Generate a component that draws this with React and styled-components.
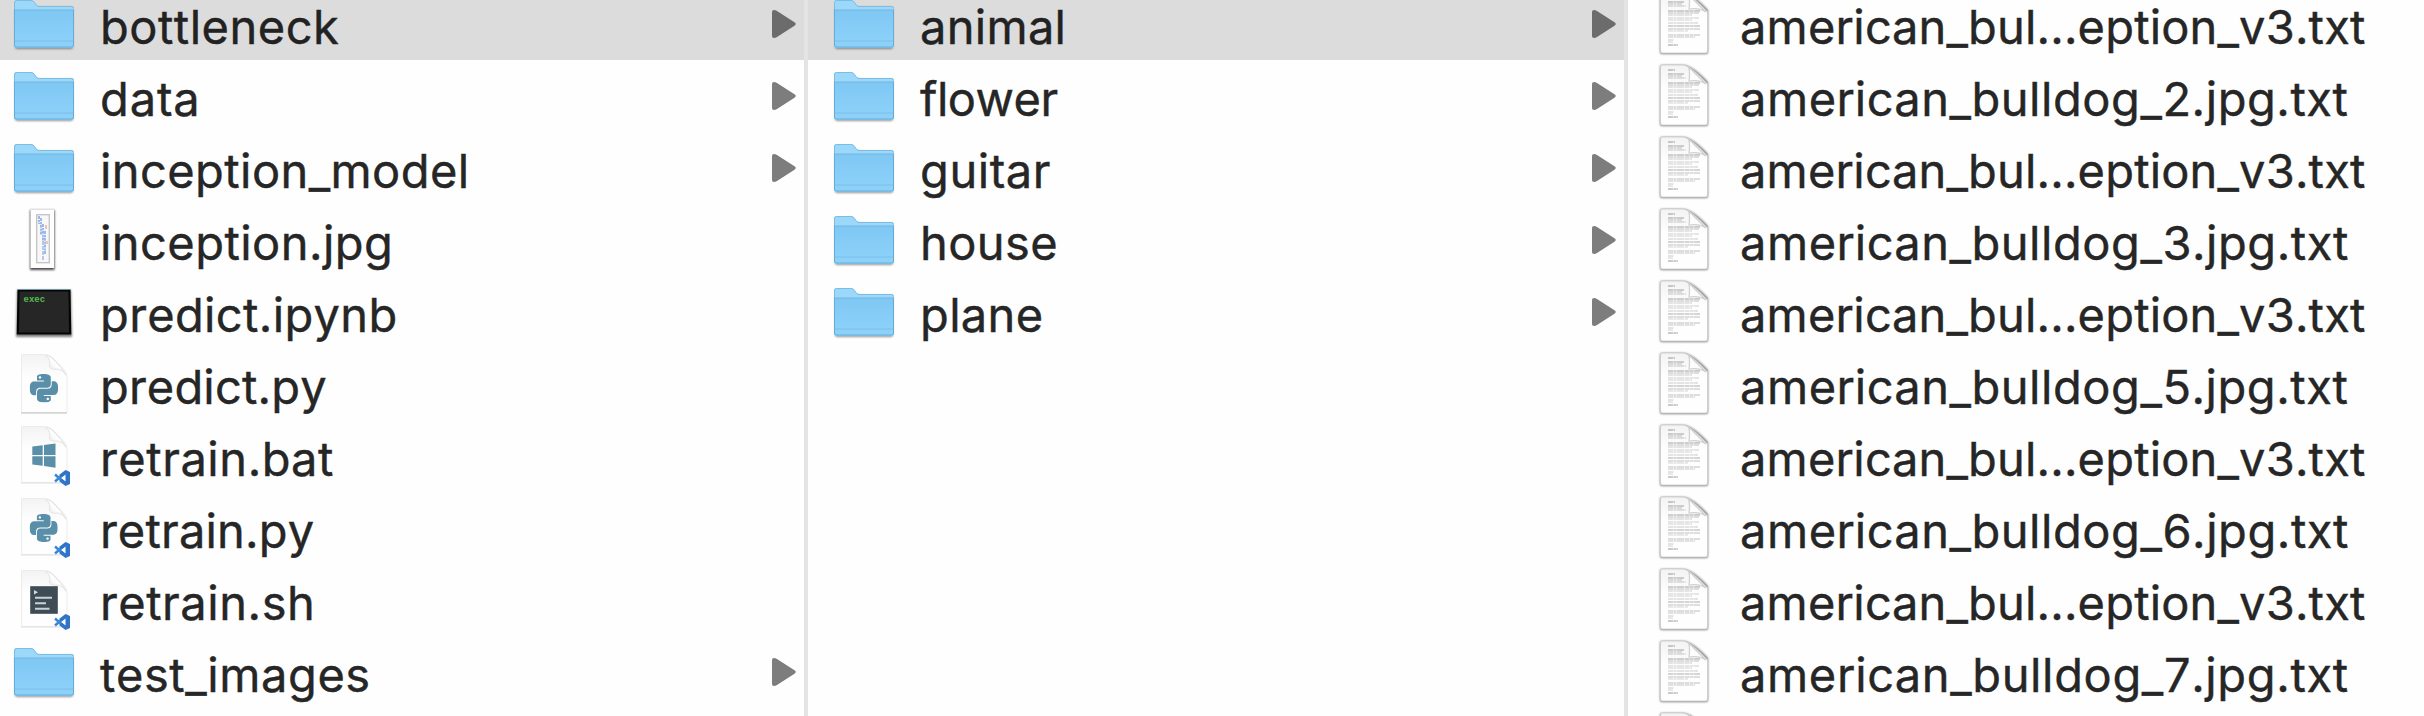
import React from "react";
import styled, { createGlobalStyle } from "styled-components";
import { SiPython } from "react-icons/si";

const GlobalStyle = createGlobalStyle`
  html, body { margin: 0; padding: 0; background: #fff; }
  body { overflow: hidden; }
`;

const Browser = styled.main`
  display: flex;
  height: 716px;
  overflow: hidden;
  background: #fefefe;
  color: #262626;
  font-family: Inter, "Liberation Sans", sans-serif;
  font-size: 47px;
  font-weight: 400;
  font-kerning: none;
  font-variant-ligatures: none;
`;

const Column = styled.ul`
  box-sizing: border-box;
  flex: ${(p) => (p.$width ? `0 0 ${p.$width}px` : "1 1 0")};
  min-width: 0;
  margin: -12px 0 0;
  padding: 0;
  list-style: none;
  border-right: ${(p) => (p.$width ? "4px solid #e4e4e4" : "0")};
`;

const Row = styled.li`
  box-sizing: border-box;
  display: flex;
  align-items: center;
  height: 72px;
  padding: 0 8px 0 ${(p) => p.$indent}px;
  background: ${(p) => (p.$selected ? "#dcdcdc" : "transparent")};
  color: ${(p) => (p.$selected ? "#222" : "#262626")};
`;

const Icon = styled.svg`
  flex: none;
  width: 64px;
  height: 64px;
  margin-right: 24px;
  overflow: visible;
`;

const Name = styled.span`
  flex: 1;
  line-height: 42px;
  padding-top: 6px;
  white-space: nowrap;
  letter-spacing: ${(p) => p.$tracking}px;
  -webkit-text-stroke: 0.4px currentColor;
`;

const Arrow = styled.svg`
  flex: none;
  width: 24px;
  height: 28px;
  fill: ${(p) => (p.$selected ? "#6c6c6c" : "#7d7d7d")};
`;

const Gradients = () => (
  <svg width="0" height="0" style={{ display: "block", height: 0 }}>
    <defs>
      <linearGradient id="folder" x1="0" y1="0" x2="0" y2="1">
        <stop offset="0" stopColor="#7fc8f4" />
        <stop offset="1" stopColor="#8ed2fa" />
      </linearGradient>
      <linearGradient id="sheet" x1="0" y1="0" x2="0" y2="1">
        <stop offset="0" stopColor="#f3f3f3" />
        <stop offset="0.4" stopColor="#fefefe" />
      </linearGradient>
      <linearGradient id="curl" x1="0" y1="1" x2="1" y2="0">
        <stop offset="0" stopColor="#dadada" />
        <stop offset="0.5" stopColor="#fff" />
        <stop offset="1" stopColor="#ddd" />
      </linearGradient>
      <filter id="soft" x="-20%" y="-20%" width="140%" height="140%">
        <feGaussianBlur stdDeviation="1.3" />
      </filter>
    </defs>
  </svg>
);

const Folder = () => (
  <>
    <rect x="3" y="15" width="58" height="42" rx="2" fill="#000" opacity=".4" filter="url(#soft)" />
    <path d="M2 53.500V10.500Q2 8 4.500 8H19Q21 8 22.300 9.700L24 12.200Q25 14 27 14H59.500Q62 14 62 16.500V53.500Q62 55.500 60 55.500H4Q2 55.500 2 53.500Z" fill="#9bd8fa" />
    <path d="M2.500 18V11Q2.500 8.500 4.500 8.500H19Q21 8.500 22.300 10.200L24 12.700Q25 14.500 27 14.500H59.500Q61.500 14.500 61.500 16.500" fill="none" stroke="#7dbde2" />
    <path d="M2 18H62V53.500Q62 55.500 60 55.500H4Q2 55.500 2 53.500Z" fill="url(#folder)" />
    <path d="M2 18H62" stroke="#74b6de" />
    <path d="M2.500 18V53Q2.500 55 4.500 55H59.500Q61.500 55 61.500 53V18" fill="none" stroke="#65add9" />
    <path d="M3 49H61" stroke="#78bce4" strokeWidth=".8" />
  </>
);

const textLines = [
  [7, 6, 0.5], [16, 10, 0.45], [14, 12, 0.3], [18, 14, 0.28], [32, 19, 0.45],
  [31, 21, 0.3], [24, 23, 0.25], [31, 26, 0.24], [24, 28, 0.23], [30, 31, 0.26],
  [32, 34, 0.4], [32, 37, 0.32], [20, 39, 0.2], [32, 43, 0.32], [27, 45, 0.28],
  [6, 48, 0.25], [5, 50, 0.22], [10, 53, 0.5],
];

const TextFile = () => (
  <>
    <path d="M8 3Q8 1 10 1H31Q40 1 56 18V60Q56 62 54 62H10Q8 62 8 60Z" fill="#000" opacity=".5" filter="url(#soft)" />
    <path d="M8.500 3Q8.500 1 10.500 1H31Q38 1 55.500 20V59Q55.500 61 53.500 61H10.500Q8.500 61 8.500 59Z" fill="url(#sheet)" stroke="#cbcbcb" strokeWidth=".8" />
    {textLines.map(([w, y, o], i) => (
      <path key={i} d={`M16 ${y}h${w}`} stroke="#777" strokeWidth="1.500" strokeDasharray="5 .5 3 .5 7 .6" opacity={o} />
    ))}
    <path d="M36 2.500C38.500 6 37.500 12 37 17Q47 15.500 54 20Z" fill="#fdfdfd" stroke="#d0d0d0" strokeWidth="1.200" />
  </>
);

const PlainSheet = ({ bottom = 59, line = "#dedede" }) => (
  <>
    <path d={`M9.500 2.500H32Q38 2.500 42 7L50 15Q55 20 55 26V${bottom - 0.5}H9.500Z`} fill="url(#sheet)" stroke="#ececec" />
    <path d="M34 3Q39 8 37.500 15Q39.500 18 46 17Q52 18 54 23Q49 15 44 10Q39 4 34 3Z" fill="url(#curl)" stroke="#dedede" strokeWidth=".8" />
    <path d={`M9 ${bottom}H55`} stroke={line} strokeWidth="1.200" />
  </>
);

const CodeBadge = () => (
  <g>
    <path d="M43 50.500L54 60M43 57.500L54 48" stroke="#3b86d6" strokeWidth="2.500" fill="none" />
    <path d="M53.500 46L58 48V60L53.500 62L47 57L49.500 54.500L53.500 57.500V50.500L49.500 53.500L47 51Z" fill="#2f74c8" />
  </g>
);

const ImageFile = () => (
  <>
    <rect x="18" y="2" width="24.500" height="60" fill="#000" opacity=".7" filter="url(#soft)" />
    <rect x="18.500" y="1.500" width="23.500" height="58.500" fill="#fefefe" />
    <rect x="24.700" y="6.700" width="12.600" height="48" fill="#f8f8fa" stroke="#c3c3c3" strokeWidth="1.300" />
    <path d="M27 8v8M29 10v17M31 16v18M33 23v23" stroke="#9eb9e6" strokeWidth="2" strokeDasharray="3 1 2 .7" />
    <path d="M31 33v20" stroke="#a8bde0" strokeWidth="1.600" strokeDasharray="4 1" />
    <path d="M34 17v4M35 33v3" stroke="#e5b4a8" strokeWidth="1.500" />
  </>
);

const ExecFile = () => (
  <>
    <path d="M5 10H59L60 57H4Z" fill="#000" opacity=".5" filter="url(#soft)" />
    <path d="M5.500 9.500H58.500L59.300 54.500H4.700Z" fill="#050505" />
    <path d="M5.500 9.500H58.500" stroke="#7396a5" strokeWidth="1" />
    <path d="M7.500 11.500H56.500L57 52.500H7Z" fill="#262626" />
    <text x="11.500" y="22" fill="#4fbd50" fontFamily="Liberation Mono, monospace" fontWeight="700" fontSize="9">exec</text>
  </>
);

const PythonPlain = () => (
  <>
    <PlainSheet bottom={61} line="#bdbdbd" />
    <SiPython x="17.700" y="22" size={28.400} color="#5a8fa9" />
  </>
);

const PythonFile = () => (
  <>
    <PlainSheet />
    <SiPython x="17.700" y="18" size={28} color="#5a8fa9" />
    <CodeBadge />
  </>
);

const BatchFile = () => (
  <>
    <PlainSheet />
    <path d="M20.300 22.600L30.700 21.300V31H20.300ZM32 21.100L43.500 19.500V31H32ZM20.300 32.300H30.700V41.800L20.300 40.500ZM32 32.300H43.500V43.700L32 42Z" fill="#5a8fa9" />
    <CodeBadge />
  </>
);

const ShellFile = () => (
  <>
    <PlainSheet />
    <rect x="18.200" y="18.200" width="27.600" height="27.600" fill="#3d4c55" />
    <path d="M22 22L26 24.300L22 26.600Z" fill="#d5dadd" />
    <path d="M23 29.800H40M23 35.300H34M23 40.800H37.500" stroke="#cbd1d5" strokeWidth="1.900" />
    <CodeBadge />
  </>
);

const icons = {
  folder: Folder, text: TextFile, image: ImageFile, exec: ExecFile,
  pythonPlain: PythonPlain, python: PythonFile, batch: BatchFile, shell: ShellFile,
};

const shortName = { name: "american_bul...eption_v3.txt", kind: "text", tracking: 0.17 };
const bulldog = (n) => ({ name: `american_bulldog_${n}.jpg.txt`, kind: "text", tracking: n === 7 ? 0.64 : 0.55 });

const columns = [
  {
    width: 808, indent: 12, items: [
      { name: "bottleneck", kind: "folder", selected: true },
      { name: "data", kind: "folder", tracking: 0.9 },
      { name: "inception_model", kind: "folder", tracking: 0.42 },
      { name: "inception.jpg", kind: "image", tracking: 0.45 },
      { name: "predict.ipynb", kind: "exec", tracking: 0.36 },
      { name: "predict.py", kind: "pythonPlain", tracking: 0.18 },
      { name: "retrain.bat", kind: "batch", tracking: 0.56 },
      { name: "retrain.py", kind: "python", tracking: 0.18 },
      { name: "retrain.sh", kind: "shell", tracking: 0.55 },
      { name: "test_images", kind: "folder", tracking: 0.58 },
    ],
  },
  {
    width: 820, indent: 24, items: [
      { name: "animal", kind: "folder", selected: true, tracking: 0.3 },
      { name: "flower", kind: "folder", tracking: -0.46 },
      { name: "guitar", kind: "folder", tracking: 0.6 },
      { name: "house", kind: "folder", tracking: 0.4 },
      { name: "plane", kind: "folder", tracking: 0.35 },
    ],
  },
  {
    indent: 24, items: [
      shortName, bulldog(2), shortName, bulldog(3), shortName, bulldog(5),
      shortName, bulldog(6), shortName, bulldog(7), { name: "", kind: "text" },
    ],
  },
];

const Item = ({ name, kind, selected, indent, tracking = 0.5 }) => {
  const Drawing = icons[kind];
  return (
    <Row $selected={selected} $indent={indent}>
      <Icon viewBox="0 0 64 64"><Drawing /></Icon>
      <Name $tracking={tracking}>{name}</Name>
      {kind === "folder" && (
        <Arrow $selected={selected} viewBox="0 0 24 28">
          <path d="M0 2Q0 0 2 0Q3.500 0 5 1L22.500 12.300Q25 14 22.500 15.700L5 27Q3.500 28 2 28Q0 28 0 26Z" />
        </Arrow>
      )}
    </Row>
  );
};

export default function App() {
  return (
    <>
      <GlobalStyle />
      <Gradients />
      <Browser>
        {columns.map((col, i) => (
          <Column key={i} $width={col.width}>
            {col.items.map((item, j) => (
              <Item key={j} indent={col.indent} {...item} />
            ))}
          </Column>
        ))}
      </Browser>
    </>
  );
}
